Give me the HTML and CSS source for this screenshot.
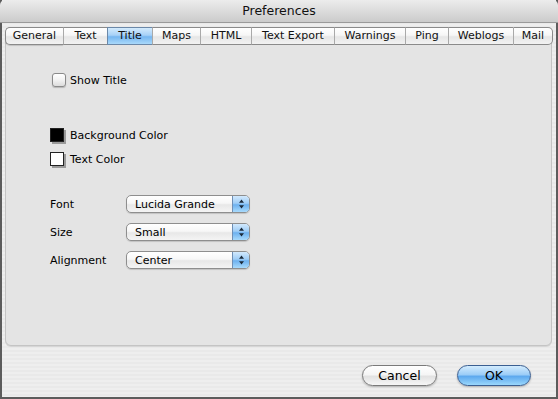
FILE: index.html
```html
<!DOCTYPE html>
<html>
<head>
<meta charset="utf-8">
<title>Preferences</title>
<link rel="stylesheet" href="styles.css">
</head>
<body>
<div class="window">
  <div class="titlebar">Preferences</div>
  <div class="main">
    <div class="tabs">
      <div class="tab first" style="width:58px">General</div>
      <div class="tab" style="width:44px">Text</div>
      <div class="tab selected" style="width:45px">Title</div>
      <div class="tab" style="width:48px">Maps</div>
      <div class="tab" style="width:51px">HTML</div>
      <div class="tab" style="width:83px">Text Export</div>
      <div class="tab" style="width:71px">Warnings</div>
      <div class="tab" style="width:43px">Ping</div>
      <div class="tab" style="width:65px">Weblogs</div>
      <div class="tab last" style="width:40px">Mail</div>
    </div>
    <div class="panel">
      <div class="row check-row">
        <span class="checkbox"></span>
        <span class="label">Show Title</span>
      </div>
      <div class="row swatch-row bg-row">
        <span class="swatch black"></span>
        <span class="label">Background Color</span>
      </div>
      <div class="row swatch-row text-row">
        <span class="swatch white"></span>
        <span class="label">Text Color</span>
      </div>
      <div class="row popup-row font-row">
        <span class="field-label">Font</span>
        <div class="popup"><span class="popup-text">Lucida Grande</span><span class="popup-arrows"><svg width="7" height="10" viewBox="0 0 7 10"><path d="M3.5 0.5 L6 3.8 L1 3.8 Z M3.5 9.5 L6 6.2 L1 6.2 Z" fill="#1b2a3a"/></svg></span></div>
      </div>
      <div class="row popup-row">
        <span class="field-label">Size</span>
        <div class="popup"><span class="popup-text">Small</span><span class="popup-arrows"><svg width="7" height="10" viewBox="0 0 7 10"><path d="M3.5 0.5 L6 3.8 L1 3.8 Z M3.5 9.5 L6 6.2 L1 6.2 Z" fill="#1b2a3a"/></svg></span></div>
      </div>
      <div class="row popup-row">
        <span class="field-label">Alignment</span>
        <div class="popup"><span class="popup-text">Center</span><span class="popup-arrows"><svg width="7" height="10" viewBox="0 0 7 10"><path d="M3.5 0.5 L6 3.8 L1 3.8 Z M3.5 9.5 L6 6.2 L1 6.2 Z" fill="#1b2a3a"/></svg></span></div>
      </div>
    </div>
    <div class="footer">
      <div class="button cancel">Cancel</div>
      <div class="button ok">OK</div>
    </div>
  </div>
</div>
</body>
</html>
```
FILE: styles.css
```css
html, body {
  margin: 0;
  padding: 0;
  background: #5a5a5a;
}
body {
  font-family: "DejaVu Sans", "Liberation Sans", sans-serif;
  font-size: 11px;
  color: #000;
}
.window {
  width: 558px;
  height: 399px;
  box-sizing: border-box;
  border: 2px solid #5c5c5c;
  border-top: 0;
  background: repeating-linear-gradient(to bottom, #eeeeee 0, #eeeeee 2px, #e9e9e9 2px, #e9e9e9 4px);
  display: flex;
  flex-direction: column;
}
.titlebar {
  height: 22px;
  margin: 0 -2px;
  border-radius: 5px 5px 0 0;
  border-bottom: 1px solid #9a9a9a;
  background: linear-gradient(to bottom, #ececec 0%, #dcdcdc 50%, #cbcbcb 100%);
  text-align: center;
  font-size: 12.5px;
  line-height: 22px;
  color: #111;
}
.main {
  padding: 4px 3px 0 3px;
  display: flex;
  flex-direction: column;
}
.tabs {
  display: flex;
  height: 18px;
  position: relative;
  z-index: 1;
}
.tab {
  box-sizing: border-box;
  height: 18px;
  line-height: 16px;
  text-align: center;
  border: 1px solid #8a8a8a;
  border-left: 1px solid #a9a9a9;
  border-right: 0;
  background: linear-gradient(to bottom, #ffffff 0%, #f6f6f6 45%, #e6e6e6 55%, #f2f2f2 100%);
  font-size: 11px;
  color: #111;
}
.tab.first {
  border-left: 1px solid #8a8a8a;
  border-radius: 5px 0 0 5px;
  box-shadow: 0 1px 1px rgba(0,0,0,0.15);
}
.tab.last {
  border-right: 1px solid #8a8a8a;
  border-radius: 0 5px 5px 0;
}
.tab.selected {
  background: linear-gradient(to bottom, #d4ebfd 0%, #a7d1f7 45%, #76b6f0 55%, #a9d9fb 100%);
  border-color: #6b88a8;
}
.panel {
  margin-top: -9px;
  height: 310px;
  box-sizing: border-box;
  width: 547px;
  background: #e4e4e4;
  border: 1px solid #c4c4c4;
  border-radius: 0 0 6px 6px;
  box-shadow: 0 1px 0 #d6d6d6;
  padding: 35px 0 0 44px;
}
.row {
  display: flex;
  align-items: center;
  height: 16px;
}
.check-row {
  padding-left: 2px;
}
.checkbox {
  width: 12px;
  height: 12px;
  border: 1px solid #8a8a8a;
  border-radius: 3px;
  background: linear-gradient(to bottom, #ffffff 0%, #f2f2f2 50%, #dcdcdc 100%);
  box-shadow: 0 1px 1px rgba(0,0,0,0.2);
  margin-right: 4px;
}
.label {
  font-size: 11px;
}
.bg-row {
  margin-top: 39px;
}
.text-row {
  margin-top: 8px;
}
.swatch {
  width: 12px;
  height: 12px;
  border: 1px solid #222;
  box-shadow: 2px 2px 0 #9a9a9a;
  margin-right: 6px;
}
.swatch.black { background: #000; }
.swatch.white { background: #fff; }
.popup-row {
  height: 18px;
  margin-top: 10px;
}
.font-row {
  margin-top: 28px;
}
.field-label {
  width: 76px;
  font-size: 11px;
}
.popup {
  width: 124px;
  height: 18px;
  box-sizing: border-box;
  border: 1px solid #8e8e8e;
  border-radius: 5px;
  background: linear-gradient(to bottom, #ffffff 0%, #f7f7f7 45%, #e8e8e8 55%, #f4f4f4 100%);
  display: flex;
  align-items: center;
  overflow: hidden;
  box-shadow: 0 1px 1px rgba(0,0,0,0.15);
}
.popup-text {
  flex: 1;
  padding-left: 8px;
  font-size: 11px;
}
.popup-arrows {
  width: 16px;
  height: 16px;
  border-left: 1px solid #6f8fb5;
  background: linear-gradient(to bottom, #d2e9fd 0%, #9fcdf6 45%, #6db1ef 55%, #a8dafc 100%);
  display: flex;
  align-items: center;
  justify-content: center;
}
.footer {
  display: flex;
  justify-content: flex-end;
  gap: 20px;
  padding: 19px 22px 0 0;
}
.button {
  height: 21px;
  box-sizing: border-box;
  border-radius: 11px;
  text-align: center;
  line-height: 19px;
  font-size: 12.5px;
  box-shadow: 0 1px 2px rgba(0,0,0,0.25);
}
.cancel {
  width: 75px;
  border: 1px solid #7a7a7a;
  background: linear-gradient(to bottom, #ffffff 0%, #f5f5f5 45%, #e2e2e2 55%, #f6f6f6 100%);
}
.ok {
  width: 74px;
  border: 1px solid #3b5f92;
  background: linear-gradient(to bottom, #d3ecfe 0%, #9ccdf7 45%, #5ea9ee 55%, #9ad7fc 100%);
}
```
